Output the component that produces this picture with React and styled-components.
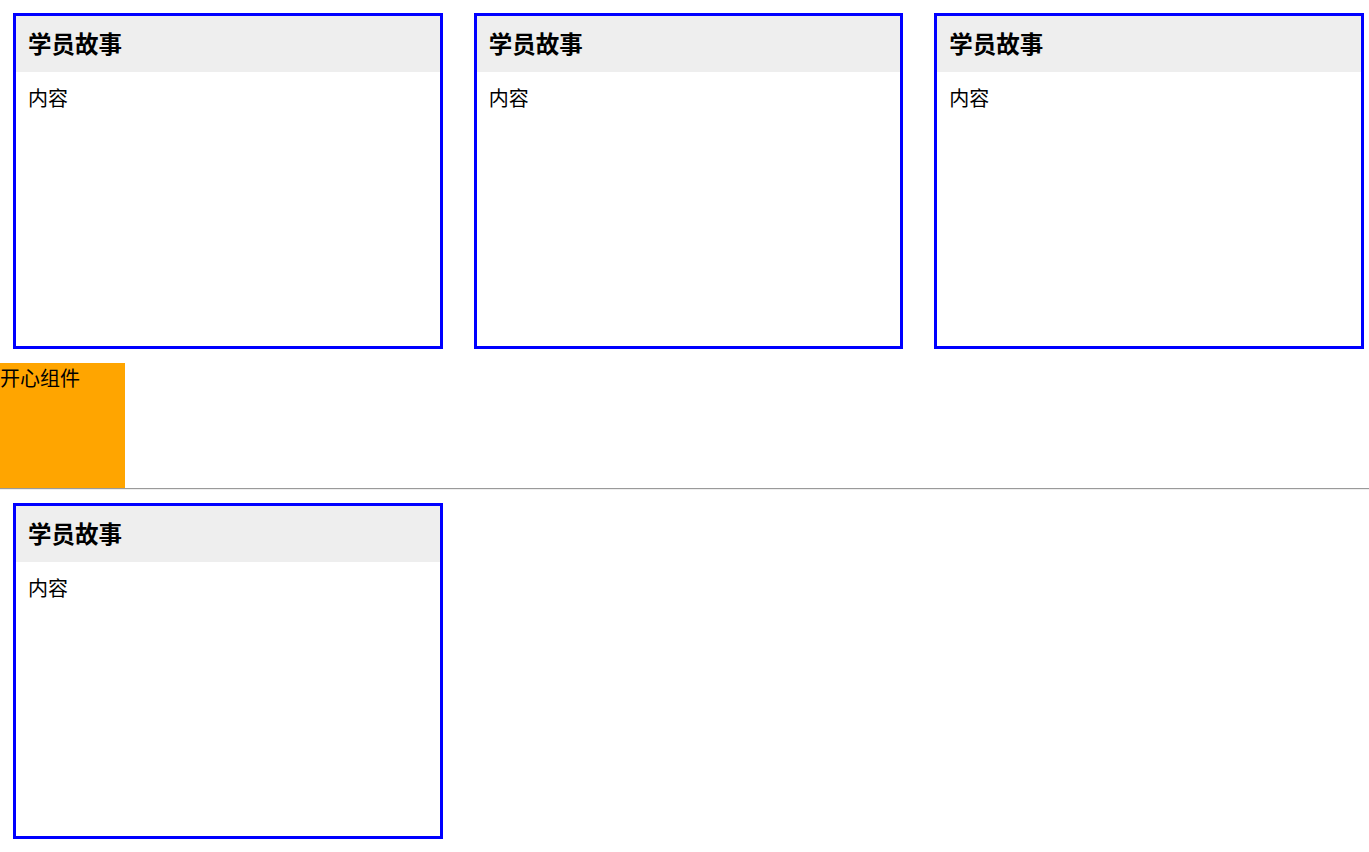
import React from 'react';
import styled, { createGlobalStyle } from 'styled-components';

const stories = ['学员故事', '学员故事', '学员故事'];

export default function App() {
    return (
        <>
            <GlobalStyle />
            <Grid $bottom={14}>
                {stories.map((title, i) => (
                    <Card key={i} title={title} />
                ))}
            </Grid>
            <HappyBox>开心组件</HappyBox>
            <Divider />
            <Grid $bottom={13}>
                <Card title="学员故事" />
            </Grid>
        </>
    );
}

function Card({ title }) {
    return (
        <Panel>
            <PanelHeader>{title}</PanelHeader>
            <PanelBody>内容</PanelBody>
        </Panel>
    );
}

const GlobalStyle = createGlobalStyle`
    body {
        margin: 0;
        background: #fff;
        color: #000;
        font-family: "Noto Sans CJK SC", "Noto Sans", sans-serif;
        font-size: 20px;
    }
`;
const Grid = styled.div`
    display: grid;
    grid-template-columns: repeat(3, 1fr);
    column-gap: 31px;
    padding: 13px 5px ${props => props.$bottom}px 13px;
`;
const Panel = styled.div`
    height: 336px;
    box-sizing: border-box;
    border: 3px solid #0000ff;
    display: flex;
    flex-direction: column;
`;
const PanelHeader = styled.h3`
    margin: 0;
    height: 56px;
    padding: 0 12px;
    display: flex;
    align-items: center;
    background: #eeeeee;
    font-size: 23.5px;
    font-weight: bold;
    line-height: 1;
`;
const PanelBody = styled.div`
    padding: 11px 12px;
    line-height: 29px;
`;
const HappyBox = styled.div`
    width: 125px;
    height: 125px;
    background: orange;
    line-height: 29px;
`;
const Divider = styled.hr`
    margin: 0;
    height: 0;
    border: 0;
    border-top: 1px solid #9a9a9a;
    border-bottom: 1px solid #eeeeee;
`;
